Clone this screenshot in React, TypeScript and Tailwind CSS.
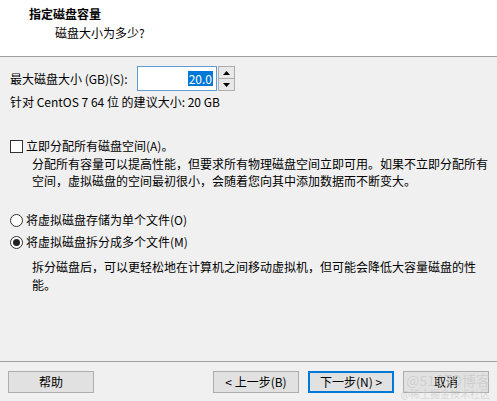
const font = { fontFamily: "'Noto Sans CJK SC', 'Liberation Sans', sans-serif" };

function Header() {
  return (
    <div className="h-[57px] bg-white border-b border-[#a0a0a0] pl-[29px] pt-[6px]">
      <div className="text-[12px] leading-[16px] font-bold text-black">指定磁盘容量</div>
      <div className="text-[12px] leading-[16px] text-black ml-[26px] mt-[3px]">磁盘大小为多少?</div>
    </div>
  );
}

function SizeInput() {
  return (
    <div className="flex items-stretch h-[25px]">
      <div className="w-[80px] bg-white border border-[#5f9bd6] flex items-center justify-end pr-[3px]">
        <span className="bg-[#0078d7] text-white text-[12px] leading-[15px] px-[1px]">20.0</span>
      </div>
      <div className="w-[17px] flex flex-col border border-[#adadad] bg-[#e8e8e8] ml-[1px]">
        <div className="flex-1 flex items-center justify-center border-b border-[#adadad]">
          <svg width="7" height="4" viewBox="0 0 7 4"><path d="M3.5 0 L7 4 L0 4 Z" fill="#000" /></svg>
        </div>
        <div className="flex-1 flex items-center justify-center">
          <svg width="7" height="4" viewBox="0 0 7 4"><path d="M0 0 L7 0 L3.5 4 Z" fill="#000" /></svg>
        </div>
      </div>
    </div>
  );
}

function Radio({ checked, label }: { checked?: boolean; label: string }) {
  return (
    <div className="flex items-center h-[16px]">
      <div className="w-[13px] h-[13px] rounded-full border border-[#333] bg-white flex items-center justify-center">
        {checked && <div className="w-[7px] h-[7px] rounded-full bg-[#222]" />}
      </div>
      <span className="ml-[3px] text-[12px] leading-[16px]">{label}</span>
    </div>
  );
}

function Button({ label, primary }: { label: string; primary?: boolean }) {
  return (
    <button
      className={
        "w-[86px] h-[22px] bg-[#e1e1e1] text-[12px] leading-[16px] text-black flex items-center justify-center " +
        (primary ? "border-2 border-[#0078d7]" : "border border-[#adadad]")
      }
    >
      {label}
    </button>
  );
}

export default function App() {
  return (
    <div className="w-[497px] h-[401px] bg-[#f0f0f0] text-black flex flex-col relative overflow-hidden" style={font}>
      <Header />
      <div className="h-[304px] px-[10px] pt-[9px] text-[12px] whitespace-nowrap">
        <div className="flex items-center">
          <span className="leading-[16px] w-[127px]">最大磁盘大小 (GB)(S):</span>
          <SizeInput />
        </div>
        <div className="leading-[16px] mt-[3px]">针对 CentOS 7 64 位 的建议大小: 20 GB</div>

        <div className="flex items-center h-[16px] mt-[28px]">
          <div className="w-[13px] h-[13px] border border-[#333] bg-white" />
          <span className="ml-[3px] leading-[16px]">立即分配所有磁盘空间(A)。</span>
        </div>
        <div className="ml-[22px] mt-[1px] leading-[17px]">
          <div>分配所有容量可以提高性能，但要求所有物理磁盘空间立即可用。如果不立即分配所有</div>
          <div>空间，虚拟磁盘的空间最初很小，会随着您向其中添加数据而不断变大。</div>
        </div>

        <div className="mt-[23px] flex flex-col gap-[6px]">
          <Radio label="将虚拟磁盘存储为单个文件(O)" />
          <Radio checked label="将虚拟磁盘拆分成多个文件(M)" />
        </div>
        <div className="ml-[22px] mt-[8px] leading-[18px]">
          <div>拆分磁盘后，可以更轻松地在计算机之间移动虚拟机，但可能会降低大容量磁盘的性</div>
          <div>能。</div>
        </div>
      </div>
      <div className="border-t border-[#a0a0a0] flex-1 flex items-start pt-[9px] px-[8px]">
        <Button label="帮助" />
        <div className="ml-auto flex gap-[9px]">
          <Button label="< 上一步(B)" />
          <Button primary label="下一步(N) >" />
          <Button label="取消" />
        </div>
      </div>
      <div className="absolute right-[7px] bottom-[2px] flex flex-col items-end text-[#c4c4c4]/60 pointer-events-none">
        <span className="text-[14px] leading-[15px]">@51CTO博客</span>
        <span className="text-[10px] leading-[11px]">@稀土掘金技术社区</span>
      </div>
    </div>
  );
}
